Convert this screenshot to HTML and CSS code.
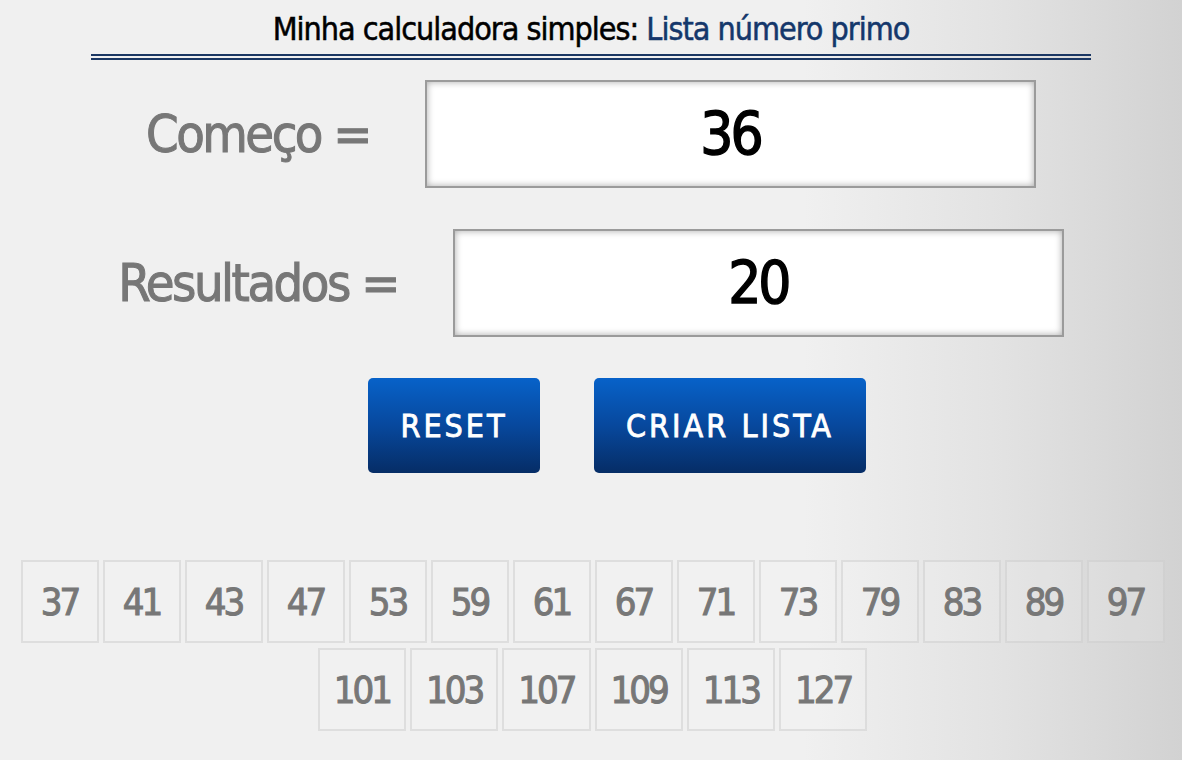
FILE: index.html
```html
<!DOCTYPE html>
<html lang="pt">
<head>
    <meta charset="UTF-8">
    <title>Lista número primo</title>
    <meta name="viewport" content="width=device-width, initial-scale=1.0">
    <link rel="stylesheet" href="styles.css">
</head>
<body>
    <h1 class="title">Minha calculadora simples: <span class="title-sub">Lista número primo</span></h1>

    <div class="field">
        <label class="field-label" for="start">Começo =</label>
        <input class="field-input" id="start" type="text" value="36">
    </div>

    <div class="field">
        <label class="field-label" for="count">Resultados =</label>
        <input class="field-input" id="count" type="text" value="20">
    </div>

    <div class="actions">
        <button class="btn btn-reset">RESET</button>
        <button class="btn btn-create">CRIAR LISTA</button>
    </div>

    <div class="primes">
        <span class="prime">37</span>
        <span class="prime">41</span>
        <span class="prime">43</span>
        <span class="prime">47</span>
        <span class="prime">53</span>
        <span class="prime">59</span>
        <span class="prime">61</span>
        <span class="prime">67</span>
        <span class="prime">71</span>
        <span class="prime">73</span>
        <span class="prime">79</span>
        <span class="prime">83</span>
        <span class="prime">89</span>
        <span class="prime">97</span>
        <span class="prime">101</span>
        <span class="prime">103</span>
        <span class="prime">107</span>
        <span class="prime">109</span>
        <span class="prime">113</span>
        <span class="prime">127</span>
    </div>
</body>
</html>
```

FILE: styles.css
```css
html, body {
    height: 100%;
}
body {
    margin: 0;
    font-family: "DejaVu Sans Condensed", "Liberation Sans", sans-serif;
    background: linear-gradient(to right, #f0f0f0 0%, #f0f0f0 68%, #e2e2e2 85%, #d2d2d2 100%);
    overflow: hidden;
}
.title {
    width: 1000px;
    margin: 0 auto;
    padding: 10px 0 6px;
    border-bottom: 6px double #1b3763;
    text-align: center;
    font-size: 32px;
    font-weight: normal;
    letter-spacing: -1px;
    line-height: 38px;
    color: #000;
    -webkit-text-stroke: 0.5px #000;
}
.title-sub {
    color: #14376b;
    -webkit-text-stroke-color: #14376b;
}
.field {
    display: flex;
    justify-content: center;
    align-items: center;
    gap: 55px;
    margin-top: 20px;
}
.field + .field {
    margin-top: 41px;
}
.field-label {
    font-size: 52px;
    letter-spacing: -2.5px;
    color: #777;
    -webkit-text-stroke: 1px #777;
}
.field-input {
    width: 611px;
    height: 108px;
    box-sizing: border-box;
    border: 2px solid #9b9b9b;
    background: #fff;
    box-shadow: inset 0 0 7px #aaa;
    text-align: center;
    font-family: inherit;
    font-size: 58px;
    letter-spacing: -3px;
    color: #000;
    -webkit-text-stroke: 1.4px #000;
    outline: none;
}
.actions {
    display: flex;
    justify-content: center;
    gap: 54px;
    margin: 41px 0 0 52px;
}
.btn {
    height: 95px;
    border: none;
    border-radius: 5px;
    background: linear-gradient(to bottom, #0762c9 0%, #07489d 50%, #062d66 100%);
    color: #fff;
    font-family: inherit;
    font-size: 32px;
    letter-spacing: 3px;
    -webkit-text-stroke: 0.8px #fff;
    cursor: pointer;
}
.btn-reset {
    width: 172px;
}
.btn-create {
    width: 272px;
}
.primes {
    display: flex;
    flex-wrap: wrap;
    justify-content: center;
    gap: 5px 4px;
    margin: 87px 16px 0 19px;
}
.prime {
    min-width: 78px;
    height: 83px;
    box-sizing: border-box;
    padding: 0 14px;
    border: 2px solid rgba(200, 200, 200, 0.45);
    background: rgba(255, 255, 255, 0.12);
    display: flex;
    align-items: center;
    justify-content: center;
    font-size: 38px;
    letter-spacing: -3px;
    color: #777;
    -webkit-text-stroke: 1px #777;
}
```
